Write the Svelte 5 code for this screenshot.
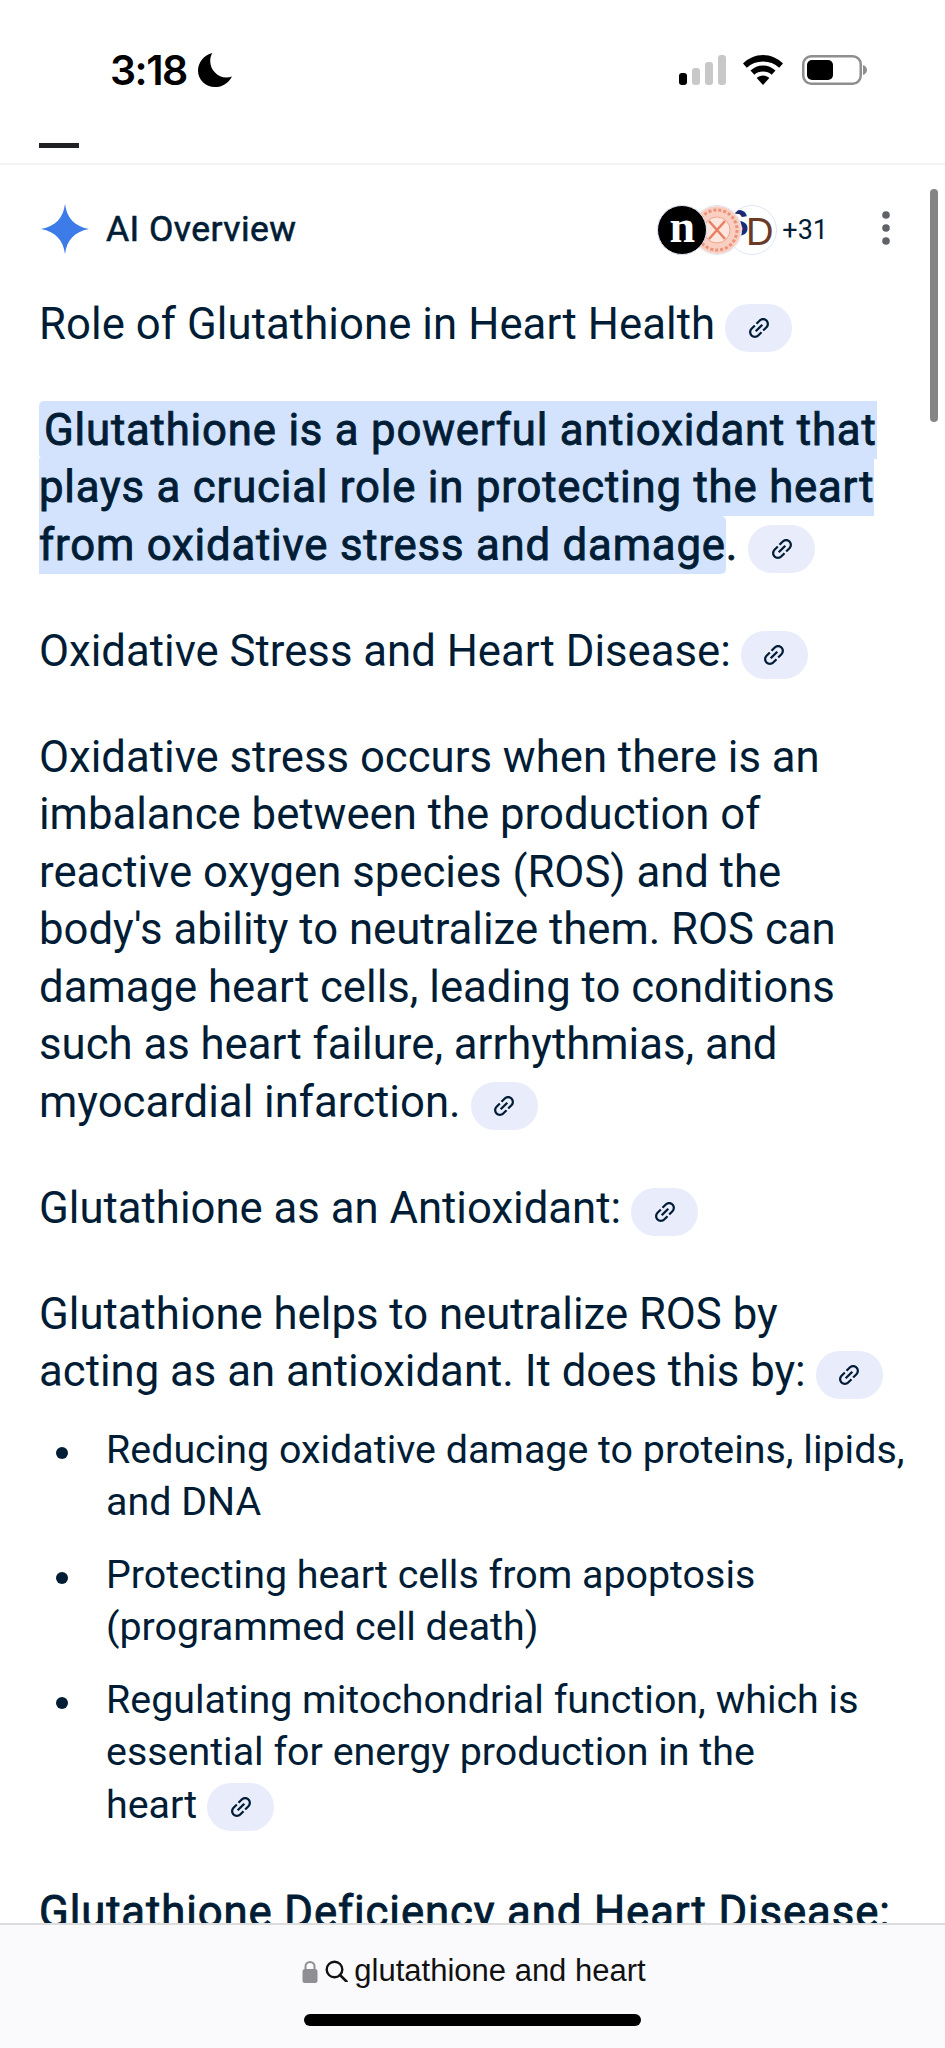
<script>
	const linkPath = "M3.9 12c0-1.71 1.39-3.1 3.1-3.1h4V7H7c-2.76 0-5 2.24-5 5s2.24 5 5 5h4v-1.9H7c-1.71 0-3.1-1.39-3.1-3.1zM8 13h8v-2H8v2zm9-6h-4v1.9h4c1.71 0 3.1 1.39 3.1 3.1s-1.39 3.1-3.1 3.1h-4V17h4c2.76 0 5-2.24 5-5s-2.24-5-5-5z";

	const bullets = [
		{ lines: ["Reducing oxidative damage to proteins, lipids,", "and DNA"], chip: false },
		{ lines: ["Protecting heart cells from apoptosis", "(programmed cell death)"], chip: false },
		{ lines: ["Regulating mitochondrial function, which is", "essential for energy production in the", "heart"], chip: true }
	];
</script>

{#snippet chip()}<span class="chip"><svg viewBox="0 0 24 24" width="28" height="28"><path d={linkPath} fill="currentColor" /></svg></span>{/snippet}

<div class="page">
	<header class="top">
		<div class="status">
			<span class="time">3:18</span>
			<svg class="moon" viewBox="0 0 32 32" width="34" height="34">
				<path d="M13.500 0C5.600 2 0 8.800 0 16.500 0 25.300 7.100 32 16 32c6.800 0 12.800-3.800 16-10-1.600.6-3.400 1-5.200 1C18.500 23 11.500 16 11.500 7.500c0-2.700.7-5.300 2-7.500z" fill="#000" />
			</svg>
			<svg class="cell" viewBox="0 0 47 30" width="47" height="30">
				<rect x="0" y="18" width="8" height="12" rx="3" fill="#000" />
				<rect x="13" y="13" width="8" height="17" rx="3" fill="#c8c8c8" />
				<rect x="26" y="7" width="8" height="23" rx="3" fill="#c8c8c8" />
				<rect x="39" y="0" width="8" height="30" rx="3" fill="#c8c8c8" />
			</svg>
			<svg class="wifi" viewBox="0 0 40 30" width="40" height="30">
				<path d="M20 0C12.500 0 5.700 3 0 8.500l3.800 4.200C8.200 8.600 13.800 6.500 20 6.500s11.800 2.100 16.200 6.200L40 8.500C34.300 3 27.500 0 20 0z" fill="#000" />
				<path d="M20 10.500c-4.700 0-9 1.900-12.500 5.100l3.800 4.200c2.300-2.200 5.300-3.300 8.700-3.300s6.400 1.100 8.700 3.300l3.800-4.200C29 12.400 24.700 10.500 20 10.500z" fill="#000" />
				<path d="M20 20.500c-2.400 0-4.700.9-6.300 2.500L20 30l6.300-7c-1.600-1.600-3.900-2.500-6.300-2.500z" fill="#000" />
			</svg>
			<svg class="battery" viewBox="0 0 65 30" width="65" height="30">
				<rect x="1.250" y="1.250" width="57.500" height="27.500" rx="8" fill="#fff" stroke="#8e8e8e" stroke-width="2.500" />
				<rect x="5" y="5" width="26" height="20" rx="5" fill="#000" />
				<path d="M61 10c2.500.8 4 2.800 4 5s-1.500 4.200-4 5z" fill="#8e8e8e" />
			</svg>
		</div>
		<div class="dash"></div>
	</header>

	<main class="content">
		<div class="scrollbar"></div>

		<div class="ai-head">
			<svg class="spark" viewBox="0 0 48 50" width="48" height="50">
				<path d="M24 0c2 14 9 22 24 25-15 3-22 11-24 25-2-14-9-22-24-25C15 22 22 14 24 0z" fill="#3c7be8" />
			</svg>
			<span class="ai-title">AI Overview</span>
			<div class="sources">
				<span class="avatar a-n">n</span>
				<span class="avatar a-seal">
					<svg viewBox="0 0 48 48" width="48" height="48">
						<circle cx="24" cy="24" r="24" fill="#f8cfc0" />
						<circle cx="24" cy="24" r="20" fill="none" stroke="#ec927a" stroke-width="3" stroke-dasharray="3 2" />
						<circle cx="24" cy="24" r="13" fill="#fce6de" stroke="#f0a690" stroke-width="1" />
						<path d="M16 15l16 18M32 15L16 33" stroke="#e87f65" stroke-width="2.500" />
					</svg>
				</span>
				<span class="avatar a-sd"><b>S</b><i>D</i></span>
				<span class="more">+31</span>
			</div>
			<svg class="dots" viewBox="0 0 10 44" width="10" height="44">
				<circle cx="5" cy="8" r="3.800" fill="#5f6368" />
				<circle cx="5" cy="21" r="3.800" fill="#5f6368" />
				<circle cx="5" cy="34" r="3.800" fill="#5f6368" />
			</svg>
		</div>

		<p class="first">Role of Glutathione in Heart Health{@render chip()}</p>

		<p class="strong"><span class="hl">Glutathione is a powerful antioxidant that<br />plays a crucial role in protecting the heart<br />from oxidative stress and damage</span>.{@render chip()}</p>

		<p>Oxidative Stress and Heart Disease:{@render chip()}</p>

		<p>Oxidative stress occurs when there is an<br />imbalance between the production of<br />reactive oxygen species (ROS) and the<br />body's ability to neutralize them. ROS can<br />damage heart cells, leading to conditions<br />such as heart failure, arrhythmias, and<br />myocardial infarction.{@render chip()}</p>

		<p>Glutathione as an Antioxidant:{@render chip()}</p>

		<p>Glutathione helps to neutralize ROS by<br />acting as an antioxidant. It does this by:{@render chip()}</p>

		<ul>
			{#each bullets as item}
				<li>{#each item.lines as line, i}{#if i > 0}<br />{/if}{line}{/each}{#if item.chip}{@render chip()}{/if}</li>
			{/each}
		</ul>

		<p class="strong cut">Glutathione Deficiency and Heart Disease:</p>
	</main>

	<footer class="bottom">
		<div class="address">
			<svg class="lock" viewBox="0 0 16 23" width="16" height="23">
				<path d="M3.500 10V6.500a4.500 4.500 0 0 1 9 0V10" fill="none" stroke="#8e8e93" stroke-width="2" />
				<rect x="0.500" y="9" width="15" height="14" rx="2.500" fill="#8e8e93" />
			</svg>
			<svg class="glass" viewBox="0 0 23 22" width="23" height="22">
				<circle cx="9.500" cy="9.500" r="7.800" fill="none" stroke="#111" stroke-width="2.400" />
				<path d="M15 15l6.500 6.500" stroke="#111" stroke-width="2.600" stroke-linecap="round" />
			</svg>
			<span>glutathione and heart</span>
		</div>
		<div class="home"></div>
	</footer>
</div>

<style>
	:global(body) {
		background: #fff;
	}

	.page {
		width: 945px;
		height: 2048px;
		display: flex;
		flex-direction: column;
		overflow: hidden;
		background: #fff;
		font-family: Roboto, "Noto Sans", sans-serif;
		color: #001d35;
	}

	.top {
		height: 165px;
		flex: none;
		box-sizing: border-box;
		border-bottom: 2px solid #f3f3f3;
		padding-top: 55px;
	}
	.status {
		display: flex;
		align-items: center;
		height: 30px;
		padding-left: 110px;
		color: #000;
	}
	.time {
		font-family: Inter, sans-serif;
		font-size: 41px;
		font-weight: 600;
		letter-spacing: -1.500px;
		line-height: 30px;
		width: 88px;
	}
	.cell {
		margin-left: 447px;
	}
	.wifi {
		margin-left: 17px;
	}
	.battery {
		margin-left: 19px;
	}
	.dash {
		width: 40px;
		height: 5px;
		background: #202124;
		margin: 58px 0 0 39px;
	}

	.content {
		position: relative;
		flex: 1;
		min-height: 0;
		overflow: hidden;
		padding: 0 39px;
		font-size: 43.700px;
		line-height: 57.500px;
	}
	.scrollbar {
		position: absolute;
		left: 930px;
		top: 24px;
		width: 8px;
		height: 233px;
		border-radius: 4px;
		background: #858585;
	}

	.ai-head {
		display: flex;
		align-items: center;
		height: 50px;
		margin-top: 39px;
	}
	.spark {
		margin-left: 2px;
		flex: none;
	}
	.ai-title {
		margin-left: 17px;
		font-size: 35.500px;
		letter-spacing: .45px;
		-webkit-text-stroke: .6px currentColor;
		line-height: 40px;
	}
	.sources {
		display: flex;
		align-items: center;
		margin-left: auto;
		margin-top: 2px;
	}
	.avatar {
		box-sizing: border-box;
		width: 50px;
		height: 50px;
		border-radius: 50%;
		display: flex;
		align-items: center;
		justify-content: center;
		overflow: hidden;
		flex: none;
		border: 1.500px solid #dfe6f5;
		background: #fff;
	}
	.a-n {
		position: relative;
		z-index: 3;
		background: #000;
		color: #fff;
		font-family: "Liberation Serif", serif;
		font-weight: 700;
		font-size: 46px;
		line-height: 40px;
		padding-bottom: 6px;
	}
	.a-seal {
		position: relative;
		z-index: 2;
		margin-left: -15px;
	}
	.a-sd {
		position: relative;
		z-index: 1;
		margin-left: -15px;
		font-family: "Liberation Sans", sans-serif;
		font-size: 38px;
		line-height: 38px;
		justify-content: flex-end;
		padding-right: 3px;
	}
	.a-sd b {
		color: #1f2a6e;
		font-size: 36px;
		margin-right: -3px;
		margin-top: -12px;
	}
	.a-sd i {
		color: #6b3a26;
		font-style: normal;
		margin-top: 4px;
	}
	.more {
		margin-left: 5px;
		font-size: 27px;
		line-height: 40px;
	}
	.dots {
		margin-left: 53px;
		margin-right: 15px;
		flex: none;
	}

	p {
		margin: 48.500px 0 0;
		white-space: nowrap;
	}
	p.first {
		margin-top: 41.500px;
		letter-spacing: .07px;
	}
	.strong {
		letter-spacing: .82px;
		-webkit-text-stroke: .9px currentColor;
	}
	.hl {
		background: #d3e3fd;
		padding: 3px 0 3px 5px;
		border-radius: 5px;
	}

	.chip {
		display: inline-flex;
		align-items: center;
		justify-content: center;
		width: 67px;
		height: 48px;
		margin: -10px 0 -10px 10px;
		border-radius: 24px;
		background: #e8ecfb;
		vertical-align: -3px;
		line-height: 0;
		-webkit-text-stroke: 0;
	}
	.chip svg {
		transform: rotate(-45deg);
	}

	ul {
		list-style: none;
		margin: 23px 0 0;
		padding: 0;
	}
	li {
		position: relative;
		margin-top: 20px;
		padding-left: 67px;
		font-size: 39.400px;
		line-height: 52.500px;
		white-space: nowrap;
	}
	li::before {
		content: "";
		position: absolute;
		left: 17px;
		top: 23px;
		width: 12px;
		height: 12px;
		border-radius: 50%;
		background: #001d35;
	}
	p.cut {
		margin-top: 52.500px;
		letter-spacing: .9px;
	}

	.bottom {
		flex: none;
		height: 125px;
		box-sizing: border-box;
		border-top: 2px solid #dcdcdc;
		background: #fafafc;
		display: flex;
		flex-direction: column;
		align-items: center;
	}
	.address {
		display: flex;
		align-items: center;
		height: 40px;
		margin-top: 26px;
		margin-left: 3px;
		color: #111;
		font-family: "Liberation Sans", sans-serif;
		font-size: 31px;
	}
	.lock {
		margin-right: 7px;
	}
	.glass {
		margin-right: 6px;
	}
	.home {
		width: 337px;
		height: 12px;
		border-radius: 6px;
		background: #000;
		margin-top: 23px;
	}
</style>
